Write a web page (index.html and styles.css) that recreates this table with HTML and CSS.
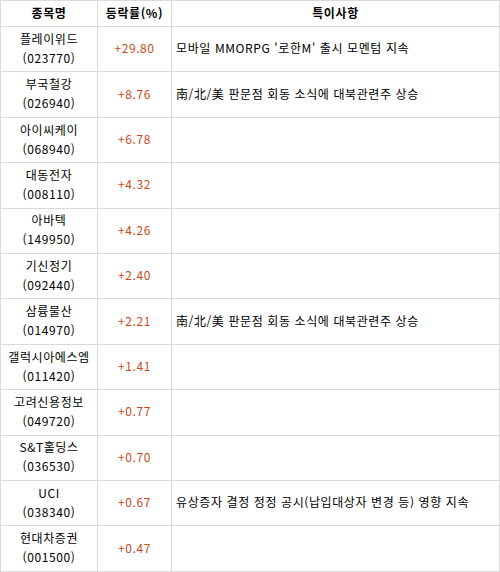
FILE: index.html
```html
<!DOCTYPE html>
<html lang="ko">
<head>
<meta charset="utf-8">
<link rel="stylesheet" href="styles.css">
</head>
<body>
<table class="stocks">
  <colgroup>
    <col class="c-name">
    <col class="c-rate">
    <col class="c-note">
  </colgroup>
  <thead>
    <tr><th>종목명</th><th>등락률(%)</th><th>특이사항</th></tr>
  </thead>
  <tbody>
    <tr><td class="name">플레이위드<br>(023770)</td><td class="rate">+29.80</td><td class="note">모바일 MMORPG '로한M' 출시 모멘텀 지속</td></tr>
    <tr><td class="name">부국철강<br>(026940)</td><td class="rate">+8.76</td><td class="note">南/北/美 판문점 회동 소식에 대북관련주 상승</td></tr>
    <tr><td class="name">아이씨케이<br>(068940)</td><td class="rate">+6.78</td><td class="note"></td></tr>
    <tr><td class="name">대동전자<br>(008110)</td><td class="rate">+4.32</td><td class="note"></td></tr>
    <tr><td class="name">아바텍<br>(149950)</td><td class="rate">+4.26</td><td class="note"></td></tr>
    <tr><td class="name">기신정기<br>(092440)</td><td class="rate">+2.40</td><td class="note"></td></tr>
    <tr><td class="name">삼륭물산<br>(014970)</td><td class="rate">+2.21</td><td class="note">南/北/美 판문점 회동 소식에 대북관련주 상승</td></tr>
    <tr><td class="name">갤럭시아에스엠<br>(011420)</td><td class="rate">+1.41</td><td class="note"></td></tr>
    <tr><td class="name">고려신용정보<br>(049720)</td><td class="rate">+0.77</td><td class="note"></td></tr>
    <tr><td class="name">S&amp;T홀딩스<br>(036530)</td><td class="rate">+0.70</td><td class="note"></td></tr>
    <tr><td class="name">UCI<br>(038340)</td><td class="rate">+0.67</td><td class="note">유상증자 결정 정정 공시(납입대상자 변경 등) 영향 지속</td></tr>
    <tr><td class="name">현대차증권<br>(001500)</td><td class="rate">+0.47</td><td class="note"></td></tr>
  </tbody>
</table>
</body>
</html>
```
FILE: styles.css
```css
html, body {
  margin: 0;
  padding: 0;
  background: #fff;
}
body {
  font-family: "Noto Sans CJK KR", "Noto Sans", sans-serif;
  font-size: 12px;
  color: #000;
}
.stocks {
  border-collapse: collapse;
  width: 500px;
  height: 572px;
  table-layout: fixed;
}
.c-name { width: 97px; }
.c-rate { width: 74px; }
.c-note { width: auto; }
.stocks th,
.stocks td {
  border: 1px solid #dadada;
  padding: 0 4px 3px;
  vertical-align: middle;
  line-height: 19px;
  letter-spacing: 0.6px;
}
.stocks thead tr { height: 26px; }
.stocks th {
  font-weight: bold;
  text-align: center;
  padding: 0 4px 2px;
}
.stocks td.name { text-align: center; }
.stocks td.rate {
  text-align: center;
  color: #cc4a1c;
}
.stocks td.note {
  text-align: left;
  padding-left: 4px;
  white-space: nowrap;
}
```
